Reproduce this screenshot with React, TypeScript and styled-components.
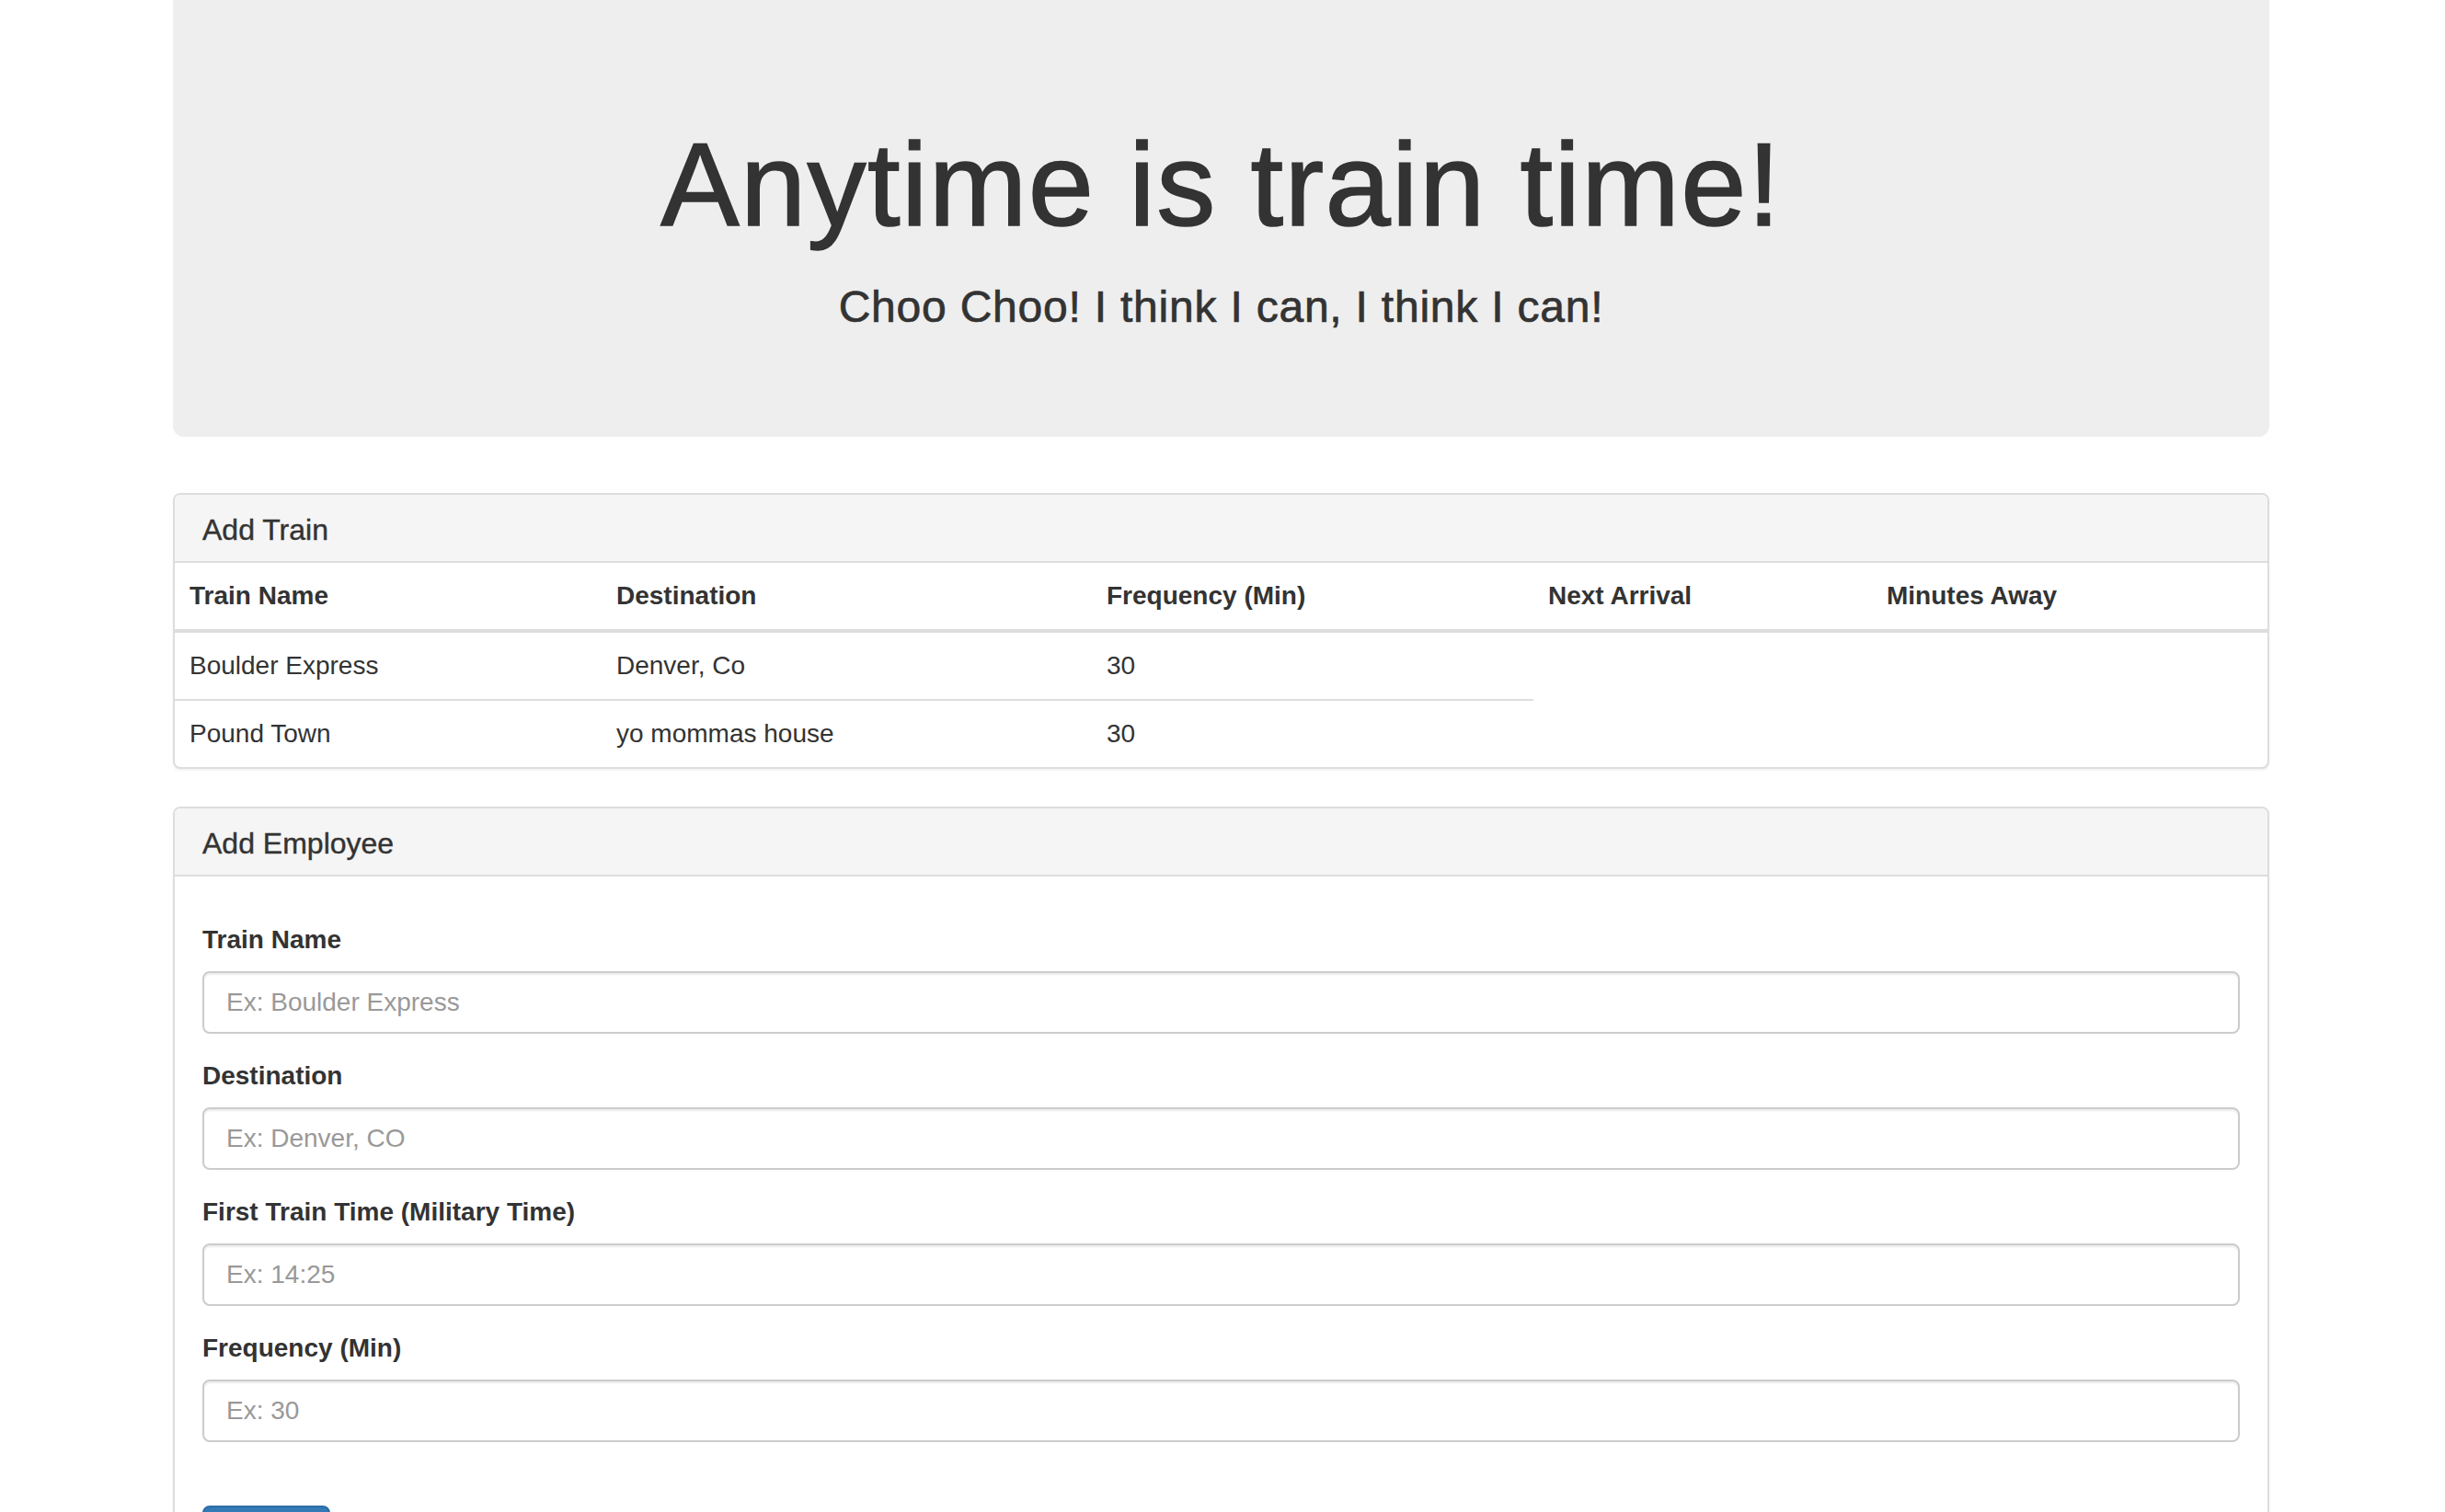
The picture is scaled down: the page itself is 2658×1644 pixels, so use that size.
import React from "react";
import styled, { createGlobalStyle } from "styled-components";

const GlobalStyle = createGlobalStyle`
  html, body {
    margin: 0;
    padding: 0;
    background: #fff;
  }
  body {
    font-family: "Liberation Sans", Arial, Helvetica, sans-serif;
    font-size: 28px;
    line-height: 40px;
    color: #333;
  }
  * {
    box-sizing: border-box;
  }
`;

const Container = styled.div`
  width: 2279px;
  margin: 0 0 0 188px;
`;

const Jumbotron = styled.div`
  background: #eee;
  border-radius: 0 0 12px 12px;
  padding: 96px 120px 94px;
  margin-bottom: 61px;
  text-align: center;
`;

const Title = styled.h1`
  margin: 35px 0 0;
  font-size: 128px;
  line-height: 1.1;
  font-weight: 400;
  letter-spacing: 1.4px;
  -webkit-text-stroke: 1.6px #333;
`;

const Subtitle = styled.h3`
  margin: 36px 0 20px;
  font-size: 48px;
  line-height: 1.1;
  font-weight: 400;
  letter-spacing: 0.78px;
  -webkit-text-stroke: 0.7px #333;
`;

const Panel = styled.div`
  background: #fff;
  border: 2px solid #ddd;
  border-radius: 8px;
  box-shadow: 0 2px 2px rgba(0, 0, 0, 0.05);
  margin-bottom: 41px;
  overflow: hidden;
`;

const PanelHeading = styled.div`
  background: #f5f5f5;
  border-bottom: 2px solid #ddd;
  padding: 20px 30px 16px;
`;

const PanelTitle = styled.h3`
  margin: 0;
  font-size: 32px;
  line-height: 36px;
  font-weight: 400;
  color: #333;
  -webkit-text-stroke: 0.4px #333;
`;

const Table = styled.table`
  width: 100%;
  border-collapse: collapse;
  border-spacing: 0;
  table-layout: fixed;
`;

const HeadCell = styled.th<{ $width?: number }>`
  width: ${(p) => (p.$width ? `${p.$width}px` : "auto")};
  text-align: left;
  vertical-align: bottom;
  padding: 16px;
  line-height: 40px;
  font-weight: 700;
  border-bottom: 4px solid #ddd;
`;

const Cell = styled.td`
  padding: 16px;
  line-height: 40px;
  vertical-align: top;
  border-top: 2px solid #ddd;
`;

const PanelBody = styled.div`
  padding: 49px 30px 30px;
`;

const FormGroup = styled.div`
  margin-bottom: 26px;
`;

const Label = styled.label`
  display: block;
  font-weight: 700;
  line-height: 40px;
  margin-bottom: 14px;
`;

const Input = styled.input`
  display: block;
  width: 100%;
  height: 68px;
  padding: 12px 24px;
  font-family: inherit;
  font-size: 28px;
  line-height: 40px;
  color: #555;
  background: #fff;
  border: 2px solid #ccc;
  border-radius: 8px;
  box-shadow: inset 0 2px 2px rgba(0, 0, 0, 0.075);
  outline: none;

  &::placeholder {
    color: #999;
  }
`;

const SubmitButton = styled.button`
  display: inline-block;
  margin-top: 43px;
  padding: 12px 24px;
  font-family: inherit;
  font-size: 28px;
  line-height: 40px;
  color: #fff;
  background: #337ab7;
  border: 2px solid #2e6da4;
  border-radius: 8px;
  cursor: pointer;
`;

const columns = [
  { label: "Train Name", width: 464 },
  { label: "Destination", width: 533 },
  { label: "Frequency (Min)", width: 480 },
  { label: "Next Arrival", width: 368 },
  { label: "Minutes Away" },
];

const trains = [
  { name: "Boulder Express", destination: "Denver, Co", frequency: 30 },
  { name: "Pound Town", destination: "yo mommas house", frequency: 30 },
];

const fields = [
  { id: "train-name", label: "Train Name", placeholder: "Ex: Boulder Express" },
  { id: "destination", label: "Destination", placeholder: "Ex: Denver, CO" },
  { id: "first-train", label: "First Train Time (Military Time)", placeholder: "Ex: 14:25" },
  { id: "frequency", label: "Frequency (Min)", placeholder: "Ex: 30" },
];

export default function App() {
  return (
    <>
      <GlobalStyle />
      <Container>
        <Jumbotron>
          <Title>Anytime is train time!</Title>
          <Subtitle>Choo Choo! I think I can, I think I can!</Subtitle>
        </Jumbotron>

        <Panel>
          <PanelHeading>
            <PanelTitle>Add Train</PanelTitle>
          </PanelHeading>
          <Table>
            <thead>
              <tr>
                {columns.map((c) => (
                  <HeadCell key={c.label} $width={c.width}>
                    {c.label}
                  </HeadCell>
                ))}
              </tr>
            </thead>
            <tbody>
              {trains.map((t) => (
                <tr key={t.name}>
                  <Cell>{t.name}</Cell>
                  <Cell>{t.destination}</Cell>
                  <Cell>{t.frequency}</Cell>
                </tr>
              ))}
            </tbody>
          </Table>
        </Panel>

        <Panel>
          <PanelHeading>
            <PanelTitle>Add Employee</PanelTitle>
          </PanelHeading>
          <PanelBody>
            <form onSubmit={(e) => e.preventDefault()}>
              {fields.map((f) => (
                <FormGroup key={f.id}>
                  <Label htmlFor={f.id}>{f.label}</Label>
                  <Input id={f.id} type="text" placeholder={f.placeholder} />
                </FormGroup>
              ))}
              <SubmitButton type="submit">Submit</SubmitButton>
            </form>
          </PanelBody>
        </Panel>
      </Container>
    </>
  );
}
